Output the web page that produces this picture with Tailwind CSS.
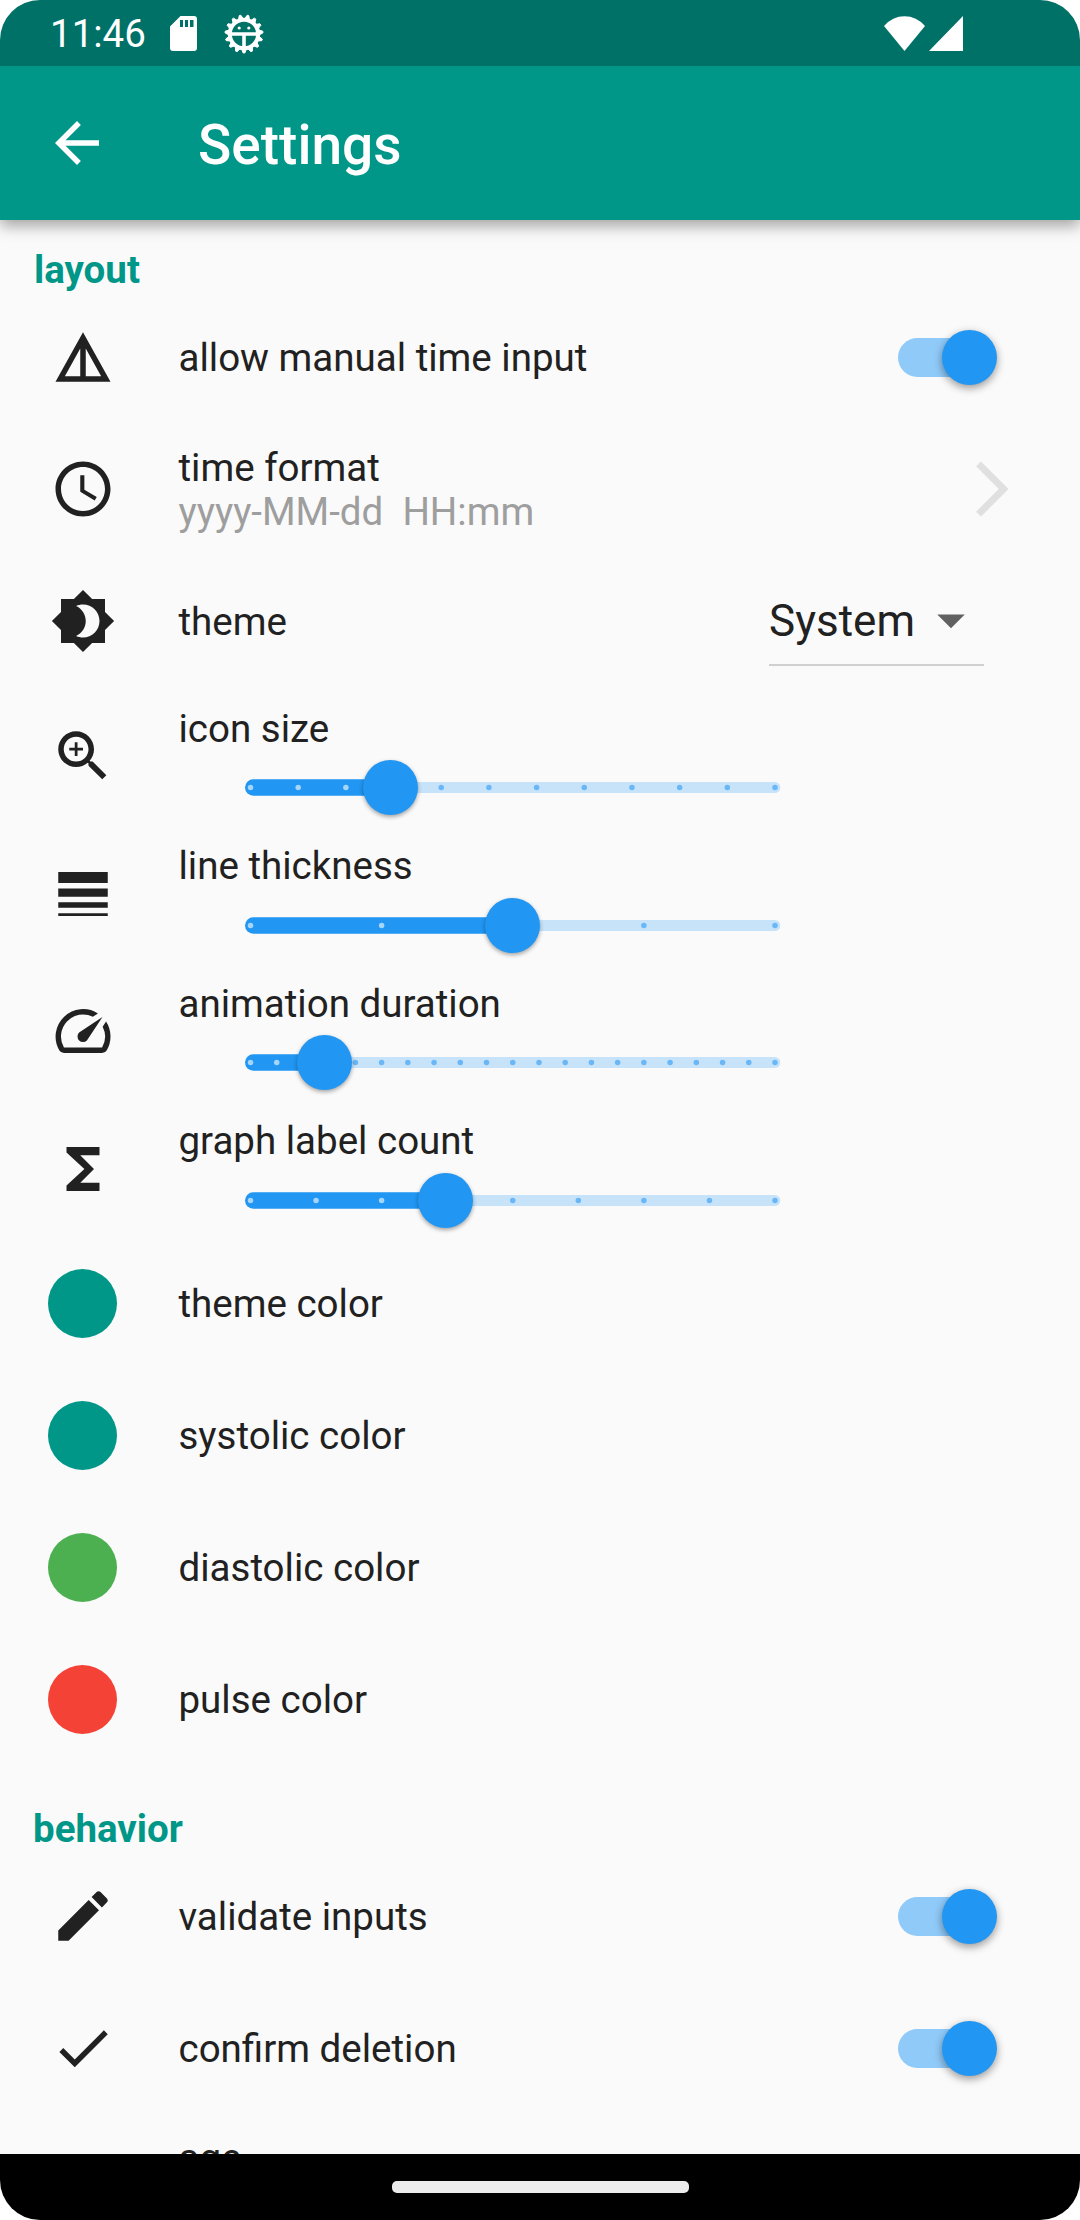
<!DOCTYPE html>
<html lang="en">
<head>
<meta charset="utf-8">
<title>Settings</title>
<script src="https://cdn.jsdelivr.net/npm/@tailwindcss/browser@4"></script>
</head>
<body class="bg-white">
<div class="w-[1080px] h-[2220px] overflow-hidden rounded-[40px] bg-[#fafafa] flex flex-col font-[Roboto,sans-serif] text-[38.5px] leading-[45px] text-[#212121]">

  <!-- status bar -->
  <header class="relative z-10 shrink-0 shadow-[0_6px_14px_rgba(0,0,0,0.35)]">
    <div class="h-[66px] bg-[#007167] flex items-center text-white pl-[50px] pr-[117px]">
      <span class="w-[96px] leading-[66px] pt-[2px] whitespace-nowrap">11:46</span>
      <svg class="ml-[24px] w-[27px] h-[35px]" viewBox="0 0 27 35" fill="currentColor"><path fill-rule="evenodd" d="M10.500 0H24a3 3 0 0 1 3 3V32a3 3 0 0 1-3 3H3a3 3 0 0 1-3-3V10.500zM10 4V11H13V4zM15 4V11H18V4zM20 4V11H23.500V4z"/></svg>
      <svg class="ml-[27px] mt-[1px] w-[40px] h-[40px]" viewBox="-20 -20 40 40" fill="none" stroke="currentColor"><circle r="14.200" stroke-width="4"/><path id="teeth" fill="currentColor" stroke="currentColor" stroke-width="1" stroke-linejoin="round"/><path d="M-13 0H13M0 0V14" stroke-width="3.600"/><circle cx="-4.800" cy="-6" r="1.600" fill="currentColor" stroke="none"/><circle cx="4.800" cy="-6" r="1.600" fill="currentColor" stroke="none"/></svg>
      <svg class="ml-auto w-[41px] h-[35px]" viewBox="0 0 41 35" fill="currentColor"><path d="M0 10Q8.500 0.300 20.500 0.300T41 10L20.500 35z"/></svg>
      <svg class="ml-[4px] w-[34px] h-[35px]" viewBox="0 0 34 35" fill="currentColor"><path d="M34 0V35H0z"/></svg>
    </div>
    <div class="h-[154px] bg-[#009688] flex items-center pl-[44px] text-white">
      <svg class="w-[66px] h-[66px]" viewBox="0 0 24 24" fill="currentColor"><path d="M20 11H7.830l5.590-5.590L12 4l-8 8 8 8 1.410-1.410L7.830 13H20v-2z"/></svg>
      <h1 class="ml-[88px] pt-[3px] text-[55px] leading-[64px] font-medium">Settings</h1>
    </div>
  </header>

  <main class="h-[1934px] shrink-0 overflow-hidden">
    <h2 class="h-[71px] pl-[34px] pt-[27px] font-bold text-[#009688]">layout</h2>

    <div class="h-[132px] flex items-center pl-[49.500px] pr-[82px]">
      <svg class="w-[66px] h-[66px]" viewBox="0 0 24 24" fill="currentColor"><path d="M12 3L2 21h20L12 3zm1 5.920L18.600 19H13V8.920zm-2 0V19H5.400L11 8.920z"/></svg>
      <span class="ml-[63px] flex-1">allow manual time input</span>
      <div class="w-[100px] h-[55px] flex items-center"><div class="w-[91px] h-[39px] rounded-full bg-[#90caf9] flex items-center"><div class="ml-[44px] w-[55px] h-[55px] shrink-0 rounded-full bg-[#2196f3] shadow-[0_3px_8px_rgba(0,0,0,0.4)]"></div></div></div>
    </div>

    <div class="h-[132px] flex items-center pl-[49.500px] pr-[55px]">
      <svg class="w-[66px] h-[66px]" viewBox="0 0 24 24" fill="currentColor"><path d="M11.990 2C6.470 2 2 6.480 2 12s4.470 10 9.990 10C17.520 22 22 17.520 22 12S17.520 2 11.990 2zM12 20c-4.420 0-8-3.580-8-8s3.580-8 8-8 8 3.580 8 8-3.580 8-8 8zm.5-13H11v6l5.250 3.150.75-1.230-4.500-2.670z"/></svg>
      <div class="ml-[63px] flex-1 pt-[2px] leading-[44px]"><div>time format</div><div class="text-[#9e9e9e] whitespace-pre">yyyy-MM-dd  HH:mm</div></div>
      <svg class="w-[66px] h-[66px] text-[#e0e0e0]" viewBox="0 0 24 24" fill="currentColor"><path d="M6.230 20.230L8 22l10-10L8 2 6.230 3.770 14.460 12z"/></svg>
    </div>

    <div class="h-[132px] flex items-center pl-[49.500px] pr-[96px]">
      <svg class="w-[66px] h-[66px]" viewBox="0 0 24 24" fill="currentColor"><path d="M20 8.690V4h-4.690L12 .69 8.690 4H4v4.690L.69 12 4 15.310V20h4.690L12 23.310 15.310 20H20v-4.690L23.310 12 20 8.690zM12 18c-.89 0-1.740-.2-2.500-.55C11.560 16.500 13 14.420 13 12s-1.440-4.500-3.500-5.450C10.260 6.200 11.110 6 12 6c3.310 0 6 2.690 6 6s-2.690 6-6 6z"/></svg>
      <span class="ml-[63px] flex-1">theme</span>
      <div class="w-[215px] h-[90px] border-b-2 border-[#d0d0d0] flex items-center text-[44px]"><span class="w-[149px] pt-[2px]">System</span><svg class="w-[66px] h-[66px] text-[#616161]" viewBox="0 0 24 24" fill="currentColor"><path d="M7 10l5 5 5-5z"/></svg></div>
    </div>

    <div class="h-[137.500px] flex items-center pl-[49.500px]">
      <svg class="w-[66px] h-[66px]" viewBox="0 0 24 24" fill="currentColor"><path d="M15.500 14h-.79l-.28-.27C15.410 12.590 16 11.110 16 9.500 16 5.910 13.090 3 9.500 3S3 5.910 3 9.500 5.910 16 9.500 16c1.610 0 3.090-.59 4.230-1.570l.27.28v.79l5 4.990L20.490 19l-4.990-5zm-6 0C7.010 14 5 11.990 5 9.500S7.010 5 9.500 5 14 7.010 14 9.500 11.990 14 9.500 14zm.5-7H9v2H7v1h2v2h1v-2h2V9h-2V7z"/></svg>
      <div class="ml-[63px] h-full pt-[19px]"><div>icon size</div><div data-slider="3/11" class="ml-[66px] mt-[9px]"></div></div>
    </div>

    <div class="h-[137.500px] flex items-center pl-[49.500px]">
      <svg class="mt-[1px] w-[66px] h-[66px]" viewBox="0 0 24 24" fill="currentColor"><path d="M3 17h18v-2H3v2zm0 3h18v-1H3v1zm0-7h18v-3H3v3zm0-9v4h18V4H3z"/></svg>
      <div class="ml-[63px] h-full pt-[18px]"><div>line thickness</div><div data-slider="2/4" class="ml-[66px] mt-[10px]"></div></div>
    </div>

    <div class="h-[137.500px] flex items-center pl-[49.500px]">
      <svg class="w-[66px] h-[66px]" viewBox="0 0 24 24" fill="currentColor"><path d="M20.380 8.570l-1.230 1.850a8 8 0 0 1-.22 7.580H5.070A8 8 0 0 1 15.580 6.850l1.850-1.230A10 10 0 0 0 3.350 19a2 2 0 0 0 1.720 1h13.850a2 2 0 0 0 1.740-1 10 10 0 0 0-.27-10.440zm-9.790 6.840a2 2 0 0 0 2.830 0l5.660-8.490-8.490 5.660a2 2 0 0 0 0 2.830z"/></svg>
      <div class="ml-[63px] h-full pt-[19px]"><div>animation duration</div><div data-slider="3/20" class="ml-[66px] mt-[9px]"></div></div>
    </div>

    <div class="h-[137.500px] flex items-center pl-[49.500px]">
      <svg class="mt-[1px] w-[66px] h-[66px]" viewBox="0 0 24 24" fill="currentColor"><path d="M18 4H6v2l6.500 6L6 18v2h12v-3h-7l5-5-5-5h7z"/></svg>
      <div class="ml-[63px] h-full pt-[18px]"><div>graph label count</div><div data-slider="3/8" class="ml-[66px] mt-[10px]"></div></div>
    </div>

    <div class="h-[132px] flex items-center pl-[48px]"><div class="w-[69px] h-[69px] rounded-full bg-[#009688]"></div><span class="ml-[61.500px]">theme color</span></div>
    <div class="h-[132px] flex items-center pl-[48px]"><div class="w-[69px] h-[69px] rounded-full bg-[#009688]"></div><span class="ml-[61.500px]">systolic color</span></div>
    <div class="h-[132px] flex items-center pl-[48px]"><div class="w-[69px] h-[69px] rounded-full bg-[#4caf50]"></div><span class="ml-[61.500px]">diastolic color</span></div>
    <div class="h-[132px] flex items-center pl-[48px]"><div class="w-[69px] h-[69px] rounded-full bg-[#f44336]"></div><span class="ml-[61.500px]">pulse color</span></div>

    <h2 class="h-[85px] pl-[33px] pt-[41px] font-bold text-[#009688]">behavior</h2>

    <div class="h-[132px] flex items-center pl-[49.500px] pr-[82px]">
      <svg class="w-[66px] h-[66px]" viewBox="0 0 24 24" fill="currentColor"><path d="M3 17.250V21h3.750L17.810 9.940l-3.750-3.750L3 17.250zM20.710 7.040c.39-.39.39-1.020 0-1.410l-2.340-2.340c-.39-.39-1.020-.39-1.410 0l-1.830 1.830 3.750 3.750 1.830-1.830z"/></svg>
      <span class="ml-[63px] flex-1">validate inputs</span>
      <div class="w-[100px] h-[55px] flex items-center"><div class="w-[91px] h-[39px] rounded-full bg-[#90caf9] flex items-center"><div class="ml-[44px] w-[55px] h-[55px] shrink-0 rounded-full bg-[#2196f3] shadow-[0_3px_8px_rgba(0,0,0,0.4)]"></div></div></div>
    </div>
    <div class="h-[132px] flex items-center pl-[49.500px] pr-[82px]">
      <svg class="w-[66px] h-[66px]" viewBox="0 0 24 24" fill="currentColor"><path d="M9 16.170L4.830 12l-1.420 1.410L9 19 21 7l-1.410-1.410z"/></svg>
      <span class="ml-[63px] flex-1">confirm deletion</span>
      <div class="w-[100px] h-[55px] flex items-center"><div class="w-[91px] h-[39px] rounded-full bg-[#90caf9] flex items-center"><div class="ml-[44px] w-[55px] h-[55px] shrink-0 rounded-full bg-[#2196f3] shadow-[0_3px_8px_rgba(0,0,0,0.4)]"></div></div></div>
    </div>
    <div class="h-[132px] pl-[178.500px] pt-[22px] leading-[44.500px]">age</div>
  </main>

  <!-- gesture bar -->
  <footer class="relative z-10 h-[66px] shrink-0 bg-black flex justify-center pt-[27px]"><div class="w-[297px] h-[12px] rounded-[5px] bg-[#ececec]"></div></footer>
</div>

<script>
  // Gear teeth, the first one pointing straight down.
  var d = '';
  for (var k = 0; k < 15; k++) {
    var a = Math.PI / 2 + k * 2 * Math.PI / 15;
    [[15, -0.17], [19, -0.045], [19, 0.045], [15, 0.17]].forEach(function (p, j) {
      d += (j ? 'L' : 'M') + (p[0] * Math.cos(a + p[1])).toFixed(2) + ' ' + (p[0] * Math.sin(a + p[1])).toFixed(2);
    });
    d += 'z';
  }
  document.getElementById('teeth').setAttribute('d', d);

  // Each slider is described as "value/divisions".
  document.querySelectorAll('[data-slider]').forEach(function (el) {
    var parts = el.dataset.slider.split('/'), v = +parts[0], n = +parts[1];
    var x = 535.300 * v / n, dots = '';
    for (var i = 0; i <= n; i++) {
      dots += '<circle cx="' + (5.500 + 524.500 * i / n) + '" cy="27.500" r="2.750" fill="' + (i <= v ? '#a6d5fa' : '#6ab7f7') + '"/>';
    }
    el.innerHTML = '<svg class="block w-[536px] h-[56px] overflow-visible" viewBox="0 0 536 56">' +
      '<rect x="' + x + '" y="22" width="' + (535.300 - x) + '" height="11" rx="5.500" fill="#c7e3fa"/>' +
      '<rect x="0" y="19.250" width="' + x + '" height="16.500" rx="8.250" fill="#2196f3"/>' + dots +
      '</svg><div class="absolute top-0 w-[55px] h-[55px] rounded-full bg-[#2196f3] shadow-[0_2px_4px_rgba(0,0,0,0.35)]" style="left:' + (x - 27.500) + 'px"></div>';
    el.classList.add('relative');
  });
</script>
</body>
</html>
